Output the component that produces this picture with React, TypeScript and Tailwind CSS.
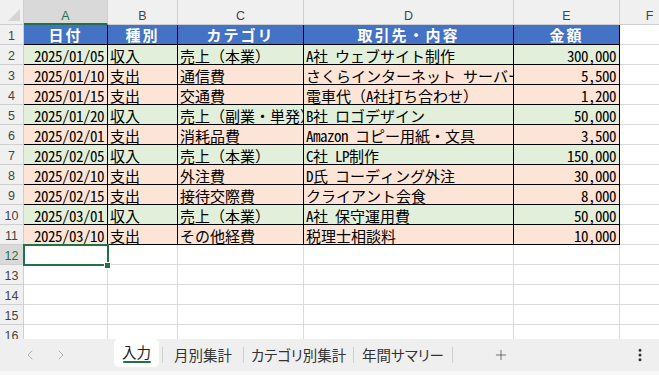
import { ChevronLeft, ChevronRight, Plus, EllipsisVertical } from "lucide-react";

type Row = { date: string; kind: string; cat: string; memo: string; amount: string };

const ROWS: Row[] = [
  { date: "2025/01/05", kind: "収入", cat: "売上（本業）", memo: "A社 ウェブサイト制作", amount: "300,000" },
  { date: "2025/01/10", kind: "支出", cat: "通信費", memo: "さくらインターネット サーバー代", amount: "5,500" },
  { date: "2025/01/15", kind: "支出", cat: "交通費", memo: "電車代（A社打ち合わせ）", amount: "1,200" },
  { date: "2025/01/20", kind: "収入", cat: "売上（副業・単発）", memo: "B社 ロゴデザイン", amount: "50,000" },
  { date: "2025/02/01", kind: "支出", cat: "消耗品費", memo: "Amazon コピー用紙・文具", amount: "3,500" },
  { date: "2025/02/05", kind: "収入", cat: "売上（本業）", memo: "C社 LP制作", amount: "150,000" },
  { date: "2025/02/10", kind: "支出", cat: "外注費", memo: "D氏 コーディング外注", amount: "30,000" },
  { date: "2025/02/15", kind: "支出", cat: "接待交際費", memo: "クライアント会食", amount: "8,000" },
  { date: "2025/03/01", kind: "収入", cat: "売上（本業）", memo: "A社 保守運用費", amount: "50,000" },
  { date: "2025/03/10", kind: "支出", cat: "その他経費", memo: "税理士相談料", amount: "10,000" },
];

const HEADERS = ["日付", "種別", "カテゴリ", "取引先・内容", "金額"];
const COLS = ["A", "B", "C", "D", "E", "F"];

const CJK = /([\u3000-\u30ff\u3400-\u9fff\uff00-\uffef]+)/;

// half-width runs are pulled in a little so they keep 7px per char at 15px
function Jp({ text }: { text: string }) {
  return (
    <>
      {text.split(CJK).map((s, i) =>
        !s ? null : CJK.test(s) ? s : <span key={i} className="tracking-[-0.5px]">{s}</span>
      )}
    </>
  );
}

function RowHead({ n, selected }: { n: number; selected?: boolean }) {
  return (
    <div
      className={`flex items-end justify-center pb-[2px] border-r border-b border-[#cfcfcf] font-['Liberation_Sans',sans-serif] text-[12.5px] leading-[12px] ${
        selected ? "bg-[#d9d9d9] text-[#217346]" : "bg-[#f0f0f0] text-[#444]"
      }`}
    >
      {n}
    </div>
  );
}

function Cell({ text, fill, right }: { text: string; fill: string; right?: boolean }) {
  return (
    <div
      className={`flex items-end pb-[1px] overflow-hidden whitespace-nowrap text-[15px] leading-[15px] border-r border-b border-black ${fill} ${
        right ? "justify-end pr-[3px]" : "pl-[2px]"
      }`}
    >
      <span className="shrink-0"><Jp text={text} /></span>
    </div>
  );
}

function Blank() {
  return <div className="bg-white border-r border-b border-[#dadada]" />;
}

export default function App() {
  return (
    <div className="w-[659px] h-[375px] overflow-hidden bg-white text-black font-['Noto_Sans_Mono_CJK_JP','Noto_Sans_CJK_JP',sans-serif]">
      {/* Sheet grid */}
      <div className="h-[339px] overflow-hidden">
        <div className="grid w-[680px] grid-cols-[24px_84px_70px_126px_210px_106px_60px] grid-rows-[25px_repeat(16,20px)]">
          {/* corner */}
          <div className="relative bg-[#f0f0f0] border-r border-b border-[#cfcfcf]">
            <svg width="23" height="24" className="absolute left-0 top-0">
              <polygon points="8,21 20,21 20,9" fill="#d4d4d4" />
            </svg>
          </div>
          {COLS.map(c =>
            c === "A" ? (
              <div key={c} className="flex items-end justify-center pb-[1px] bg-[#d9d9d9] border-r border-[#cfcfcf] border-b-2 border-b-[#217346] text-[#217346] font-['Liberation_Sans',sans-serif] text-[12.5px] leading-[12px]">
                {c}
              </div>
            ) : (
              <div key={c} className="flex items-end justify-center pb-[2px] bg-[#f0f0f0] border-r border-b border-[#cfcfcf] text-[#444] font-['Liberation_Sans',sans-serif] text-[12.5px] leading-[12px]">
                {c}
              </div>
            )
          )}

          {/* Row 1: table header */}
          <RowHead n={1} />
          {HEADERS.map(h => (
            <div key={h} className="flex items-center justify-center bg-[#4472c4] border-r border-b border-black text-white font-bold text-[15px] leading-[15px] tracking-[2px] whitespace-nowrap">
              {h}
            </div>
          ))}
          <Blank />

          {/* Rows 2-11 */}
          {ROWS.map((r, i) => {
            const fill = r.kind === "収入" ? "bg-[#e2efda]" : "bg-[#fce4d6]";
            return [
              <RowHead key={`h${i}`} n={i + 2} />,
              <Cell key={`a${i}`} text={r.date} fill={fill} right />,
              <Cell key={`b${i}`} text={r.kind} fill={fill} />,
              <Cell key={`c${i}`} text={r.cat} fill={fill} />,
              <Cell key={`d${i}`} text={r.memo} fill={fill} />,
              <Cell key={`e${i}`} text={r.amount} fill={fill} right />,
              <Blank key={`f${i}`} />,
            ];
          })}

          {/* Rows 12-16 */}
          {[12, 13, 14, 15, 16].map(n => [
            <RowHead key={`h${n}`} n={n} selected={n === 12} />,
            n === 12 ? (
              <div key={`a${n}`} className="relative bg-white border-r border-b border-[#dadada]">
                <div className="absolute -left-[1px] -top-[1px] w-[86px] h-[22px] border-2 border-[#217346]" />
                <div className="absolute left-[80px] top-[17px] w-[7px] h-[7px] bg-[#217346] border border-white" />
              </div>
            ) : (
              <Blank key={`a${n}`} />
            ),
            <Blank key={`b${n}`} />,
            <Blank key={`c${n}`} />,
            <Blank key={`d${n}`} />,
            <Blank key={`e${n}`} />,
            <Blank key={`f${n}`} />,
          ])}
        </div>
      </div>

      {/* Sheet tabs */}
      <div className="h-[36px] bg-[#efefef] text-[14.5px] text-[#333] font-['Noto_Sans_CJK_JP',sans-serif] [font-feature-settings:'palt']">
        <div className="flex h-[32px] items-center">
          <div className="flex w-[114px] items-center gap-[15px] pl-[22px] text-[#a0a0a0]">
            <ChevronLeft size={16} strokeWidth={1.25} />
            <ChevronRight size={16} strokeWidth={1.25} />
          </div>
          <div className="self-start flex h-[28px] w-[45px] flex-col items-center justify-end gap-[1px] pb-[4px] rounded-[5px] bg-white">
            <span className="leading-[16px] text-[#222]">入力</span>
            <span className="h-[2px] w-[28px] rounded-full bg-[#217346]" />
          </div>
          <div className="ml-[3px] h-[16px] w-[1px] bg-[#cfcfcf]" />
          <div className="w-[80px] text-center leading-[16px]">月別集計</div>
          <div className="h-[16px] w-[1px] bg-[#cfcfcf]" />
          <div className="w-[109px] text-center leading-[16px]">カテゴリ別集計</div>
          <div className="h-[16px] w-[1px] bg-[#cfcfcf]" />
          <div className="w-[98px] text-center leading-[16px]">年間サマリー</div>
          <div className="h-[16px] w-[1px] bg-[#cfcfcf]" />
          <div className="flex w-[95px] justify-center text-[#444]">
            <Plus size={16} strokeWidth={1.1} />
          </div>
          <div className="ml-auto pr-[11px] text-[#333]">
            <EllipsisVertical size={16} strokeWidth={2.5} />
          </div>
        </div>
        <div className="h-[4px] bg-[#f8f8f8]" />
      </div>
    </div>
  );
}
